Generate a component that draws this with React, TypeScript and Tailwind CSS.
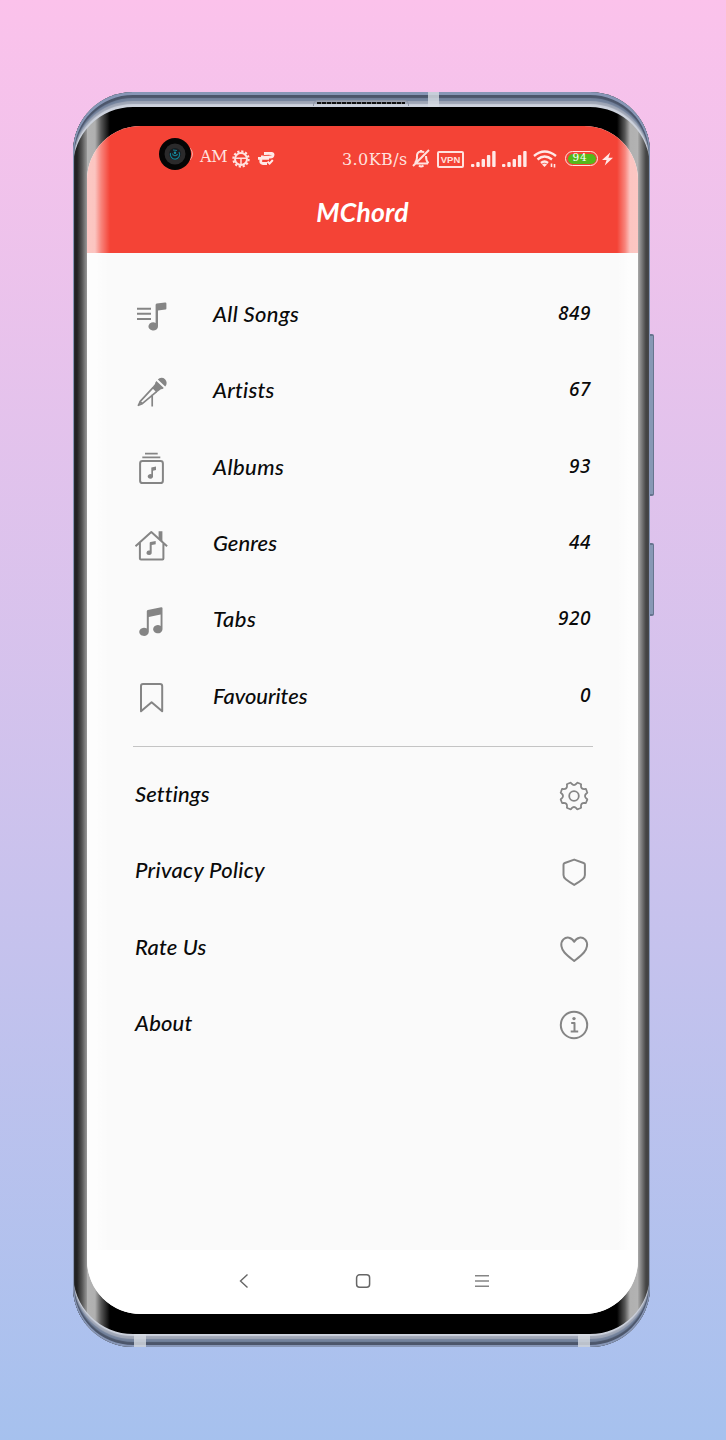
import React from 'react';
import type { ReactNode } from 'react';

const Icon = ({ children, className = 'stroke-2' }: { children: ReactNode; className?: string }) => (
  <svg viewBox="0 0 34 34" className={`size-[34px] shrink-0 fill-none stroke-[#858585] ${className}`} strokeLinejoin="round">
    {children}
  </svg>
);
const solid = 'fill-[#858585] stroke-none';

const SongsIcon = () => (
  <Icon>
    <path d="M3 8.7H17M3 13.7H17M3 18.9H17" />
    <path className={solid} d="M21.6 5Q21.6 3.8 22.8 3.6L31 2.6Q32.4 2.4 32.4 3.6V8.6Q32.4 9.5 31.5 9.6L24 10.6V26.2A4.8 4.1 0 1 1 21.6 22.9Z" />
  </Icon>
);
const MicIcon = () => (
  <Icon>
    <path className={solid} d="M23.8 3.4A5.1 5.1 0 0 1 31.2 10.5ZM22.4 5L29.8 12.1Q28.8 13.3 26.9 13.3L22.6 16.4L17.9 11.8L21 8Q21 6.3 22.4 5Z" />
    <path className="stroke-[1.7]" d="M19 11.6L6 25.6L8.3 27.7L22.6 15.6M6.2 25.6L4.4 29.3L8.2 27.6M18.2 18.6V30.4" />
  </Icon>
);
const AlbumIcon = () => (
  <Icon>
    <path className="stroke-[1.8]" d="M11 1.6H23.7M8.3 5.3H26.3" />
    <rect x="6.1" y="9.1" width="22.8" height="22" rx="2.4" />
    <path className={solid} d="M17.3 15.5L22 14.4V18L19 18.7V23.8A2.7 2.3 0 1 1 17.3 22.2Z" />
  </Icon>
);
const HouseIcon = () => (
  <Icon>
    <path d="M1.5 17.2L17.3 3L33.1 17.2M5.9 14V29.5Q5.9 30.4 7 30.4H28.5Q29.4 30.4 29.4 29.5V14" />
    <path className={solid} d="M24.6 2.2H28.4V13L24.6 9.5ZM15.7 14Q15.7 13.2 16.5 13L21.7 12V15.3L17.7 16.1V23.6A2.6 2.2 0 1 1 15.7 21.6Z" />
  </Icon>
);
const NotesIcon = () => (
  <Icon>
    <path className={solid} d="M12.8 6.2Q12.8 5.2 13.8 4.9L27.2 2.3Q28.5 2.2 28.5 3.2V24.2A4.7 4.1 0 1 1 26.6 20.9V9.4L14.8 12V26.8A4.8 4.1 0 1 1 12.8 23.5Z" />
  </Icon>
);
const BookmarkIcon = () => (
  <Icon>
    <path d="M7 30.3V5Q7 2.9 9 2.9H26Q28.2 2.9 28.2 5V30.3L17.6 21.2Z" />
  </Icon>
);

const gearPath =
  Array.from({ length: 8 }, (_, i) => {
    const at = (r: number, deg: number) => {
      const a = ((deg + i * 45) * Math.PI) / 180;
      return `${(17 + r * Math.cos(a)).toFixed(2)} ${(17 + r * Math.sin(a)).toFixed(2)}`;
    };
    return `${i ? 'L' : 'M'}${at(12.6, 11.5)}Q${at(14.2, 13)} ${at(13.7, 18)}L${at(13.7, 27)}Q${at(14.2, 32)} ${at(12.6, 33.5)}Q${at(9.6, 45)} ${at(12.6, 56.5)}`;
  }).join('') + 'Z';

const GearIcon = () => (
  <Icon className="stroke-[1.8]">
    <path d={gearPath} />
    <circle cx="17" cy="17" r="4.8" />
  </Icon>
);
const ShieldIcon = () => (
  <Icon>
    <path d="M17.2 4.6L26.6 8Q27.9 8.5 27.9 9.8V20Q27.9 22.4 25.6 24.2Q22.5 26.7 17.2 29.9Q11.9 26.7 8.8 24.2Q6.5 22.4 6.5 20V9.8Q6.5 8.5 7.8 8Z" />
  </Icon>
);
const HeartIcon = () => (
  <Icon>
    <path d="M17.2 9.8C14.5 4.7 9.3 4.6 6.4 7.4C2.6 11.3 4.5 17 7.5 20.5C10.4 23.9 13.7 26.2 17.2 28.9C20.7 26.2 24 23.9 26.9 20.5C29.9 17 31.8 11.3 28 7.4C25.1 4.6 19.9 4.7 17.2 9.8Z" />
  </Icon>
);
const InfoIcon = () => (
  <Icon>
    <circle cx="17" cy="17" r="13.2" />
    <circle className={solid} cx="17" cy="10.6" r="1.7" />
    <path d="M14.2 15H17.5V23.5M13.7 23.6H21.2" />
  </Icon>
);

const library = [
  { label: 'All Songs', count: '849', icon: <SongsIcon />, spacing: 'tracking-[0.35px]' },
  { label: 'Artists', count: '67', icon: <MicIcon />, spacing: 'tracking-[0.2px]' },
  { label: 'Albums', count: '93', icon: <AlbumIcon />, spacing: 'tracking-[0.45px]' },
  { label: 'Genres', count: '44', icon: <HouseIcon />, spacing: 'tracking-[0.05px]' },
  { label: 'Tabs', count: '920', icon: <NotesIcon />, spacing: 'tracking-[0.45px]' },
  { label: 'Favourites', count: '0', icon: <BookmarkIcon />, spacing: 'tracking-[-0.05px]' },
];
const more = [
  { label: 'Settings', icon: <GearIcon />, spacing: 'tracking-[0.1px]' },
  { label: 'Privacy Policy', icon: <ShieldIcon />, spacing: 'tracking-[0.3px]' },
  { label: 'Rate Us', icon: <HeartIcon />, spacing: 'tracking-[0.15px]' },
  { label: 'About', icon: <InfoIcon />, spacing: 'tracking-[0.15px]' },
];

const Signal = () => (
  <svg viewBox="0 0 25 16" className="h-4 w-[25px] fill-[#ffe9e7]">
    <rect x="0" y="13" width="3.4" height="3" rx="1" />
    <rect x="5.3" y="11" width="3.4" height="5" rx="1" />
    <rect x="10.6" y="8" width="3.4" height="8" rx="1" />
    <rect x="15.9" y="4" width="3.4" height="12" rx="1" />
    <rect x="21.2" y="0" width="3.4" height="16" rx="1" />
  </svg>
);

const StatusBar = () => (
  <div className="flex h-[62px] items-start pl-[72px] pr-[25px] font-['DejaVu_Serif',serif] text-[16px] leading-[20px] text-[#ffe2df]">
    <svg viewBox="0 0 34 34" className="mt-[11px] h-[34px] w-[34px] shrink-0">
      <path d="M31 11Q36 17 31 23" className="fill-none stroke-[#f9aaa3]" />
      <circle cx="16" cy="17" r="16" fill="#050505" />
      <circle cx="16" cy="17" r="10.5" fill="#2b2a2b" />
      <circle cx="16" cy="17" r="6" fill="#171c20" />
      <path d="M11.5 16A4.7 4.7 0 1 0 20 15M13.5 16.5A2.6 2.6 0 0 0 18.5 17M14 13L18 13.5" fill="none" stroke="#127e91" strokeWidth="1.2" />
      <circle cx="16" cy="15.7" r="1.2" fill="#1b8ca0" />
    </svg>
    <span className="ml-[7px] mt-[21px] w-[27px] tracking-[-0.4px]">AM</span>
    <svg viewBox="0 0 18 18" className="ml-[5px] mt-[24px] size-[18px] shrink-0 fill-none stroke-[#ffe2df]">
      <circle cx="9" cy="9" r="6" strokeWidth="2" />
      <circle cx="9" cy="9" r="7.6" strokeWidth="2.2" strokeDasharray="2.2 1.78" />
      <path d="M4 8.2H14M9 8V14" strokeWidth="1.5" />
    </svg>
    <svg viewBox="0 0 18 16" className="ml-[7px] mt-[25px] h-4 w-[18px] shrink-0">
      <path d="M7 2.5H14.5Q16.5 2.5 16 4.2Q15.6 6 13.5 6H4M1 7.3H12M4 8.5Q2.8 12.4 6 12.5H10" fill="none" stroke="#ffe9e7" strokeWidth="2.8" />
      <path d="M10.5 10.5L12.6 12.6L15.8 9" fill="none" stroke="#ffe9e7" strokeWidth="2" />
      <path d="M6.5 4.6L12.5 4.2M6 10H10.5" stroke="#f44336" strokeWidth=".8" />
    </svg>
    <span className="ml-auto mt-[24px] w-[67px] tracking-[0.4px]">3.0KB/s</span>
    <svg viewBox="0 0 18 20" className="ml-[3px] mt-[22px] h-5 w-[18px] shrink-0 fill-none stroke-[#ffe2df] stroke-2">
      <path d="M3 15.5H16M3 15Q5.2 12 5 9Q4.5 4 9 3.6Q11 3.6 12 4.5M14 8Q14 13 16.5 15.3M1 18L17 2M7 17.5Q9 19.5 11.5 17.5M9 2V4" />
    </svg>
    <div className="ml-[7px] mt-[25px] flex h-[17px] w-[27px] shrink-0 items-center justify-center rounded-[2px] border-2 border-[#ffe2df] font-['Liberation_Sans',sans-serif] text-[9.5px] font-bold">VPN</div>
    <div className="ml-[7px] mt-[25px] flex shrink-0 gap-[6px]"><Signal /><Signal /></div>
    <svg viewBox="0 0 24 18" className="ml-[6px] mt-[24px] h-[18px] w-[24px] shrink-0 fill-none stroke-[#ffe9e7] stroke-[2.4]">
      <path d="M1 6Q11.5 -3 23 6M4.5 9.5Q11.5 3.5 19 9.5M8 13Q11.5 10 15 13" />
      <path d="M9 14.5Q11.5 12.5 14 14.5L11.5 17Z" fill="#ffe9e7" stroke="none" />
      <path d="M18.5 13.5V17M21.5 14V17.5" className="stroke-[1.6]" />
    </svg>
    <div className="ml-[8px] mt-[25px] flex h-[15px] w-[33px] shrink-0 rounded-full border-[1.3px] border-[#ffe2df] p-[1.5px]">
      <div className="flex w-full items-center rounded-full bg-[#55b91a] pb-[3px] pl-[5px] text-[10.5px] leading-[9px] tracking-[0.8px] text-white">94</div>
    </div>
    <svg viewBox="0 0 12 14" className="ml-[4px] mt-[26px] h-[14px] w-[11px] shrink-0 fill-[#ffe9e7]"><path d="M9 0L0 8H5L3 14L12 5.5H7Z" /></svg>
  </div>
);

export default function App() {
  return (
    <div className="relative h-[1440px] w-[726px] overflow-hidden bg-gradient-to-b from-[#fbc2eb] to-[#a6c1ee] pt-[92px] font-['Lato',sans-serif] text-[#0a0a0a]">
      <div className="absolute left-[649px] top-[334px] h-[162px] w-[5px] rounded-r-[2px] border-y-2 border-r border-[#66758f] bg-[#8798b5]" />
      <div className="absolute left-[649px] top-[543px] h-[73px] w-[5px] rounded-r-[2px] border-y-2 border-r border-[#66758f] bg-[#8798b5]" />

      <main className="relative ml-[73px] h-[1255px] w-[577px] overflow-hidden rounded-[60px] bg-black pb-[33px] pl-[14px] pr-[12px] pt-[34px]">
        <div className="flex h-full flex-col overflow-hidden rounded-[54px] bg-[#fafafa]">
          <header className="h-[127px] shrink-0 bg-[#f44336]">
            <StatusBar />
            <h1 className="pt-[8px] text-center text-[26.5px] font-bold italic leading-[32px] tracking-[0.2px] text-white">MChord</h1>
          </header>
          <div className="grow pl-[47px] pr-[45px] pt-[24px]">
            {library.map(({ label, count, icon, spacing }) => (
              <div key={label} className="flex h-[76.3px] items-center">
                <div className="pt-[3px]">{icon}</div>
                <span className={`ml-[45px] pb-[2px] text-[22px] font-medium italic leading-none ${spacing}`}>{label}</span>
                <span className="ml-auto pb-[3px] pr-[2px] font-['Noto_Sans',sans-serif] text-[19px] font-medium italic leading-none tracking-[0.5px]">{count}</span>
              </div>
            ))}
            <hr className="-ml-px mt-[11px] h-px border-0 bg-[#c4c4c4]" />
            <div className="pt-[10px]">
              {more.map(({ label, icon, spacing }) => (
                <div key={label} className="flex h-[76.3px] items-center justify-between">
                  <span className={`pb-[2px] pl-px text-[22px] font-medium italic leading-none ${spacing}`}>{label}</span>
                  <div className="pr-[2px] pt-[2px]">{icon}</div>
                </div>
              ))}
            </div>
          </div>
          <nav className="flex h-[64px] shrink-0 items-center justify-between bg-white pb-[2px] pl-[149px] pr-[148px]">
            <svg viewBox="0 0 16 16" className="size-4 fill-none stroke-[#666] stroke-[1.4]"><path d="M11.5 1.5L4.5 8L11.5 14.5" /></svg>
            <svg viewBox="0 0 16 16" className="size-4 fill-none stroke-[#666] stroke-[1.5]"><rect x="1.6" y="1.8" width="13" height="12.5" rx="3" /></svg>
            <svg viewBox="0 0 16 16" className="size-4 stroke-[#858585] stroke-[1.6]"><path d="M1 2.8H15M1 8H15M1 13.2H15" /></svg>
          </nav>
        </div>
        <div className="pointer-events-none absolute inset-y-0 left-0 w-[38px] bg-[linear-gradient(90deg,#222_0,#222_4px,#555_9px,#999_14px,rgba(255,255,255,.7)_14px,rgba(255,255,255,.69)_22px,rgba(255,255,255,.35)_28px,transparent_37px)]" />
        <div className="pointer-events-none absolute inset-y-0 right-0 w-[38px] bg-[linear-gradient(270deg,#444_0,#444_4px,#777_8px,#aaa_12px,rgba(255,255,255,.7)_12px,rgba(255,255,255,.69)_20px,rgba(255,255,255,.35)_25px,transparent_33px)]" />
        <div className="pointer-events-none absolute inset-0 rounded-[60px] shadow-[inset_0_2px_0_1px_#8796b6,inset_0_-1px_0_1px_#8796b6,inset_0_5px_1px_1px_#4c566b,inset_0_-4px_1px_1px_#4c566b,inset_0_9px_1px_0_#74839d,inset_0_-8px_1px_0_#74839d,inset_0_12px_1px_0_#a0a7b7,inset_0_-11px_1px_0_#a0a7b7,inset_0_15px_0_0_#cdd2dd,inset_0_-13px_0_0_#cdd2dd]" />
        <div className="absolute left-[355px] top-0 h-[15px] w-[11px] bg-[#d7dce4]/80" />
        <div className="absolute bottom-0 left-[61px] h-[13px] w-[12px] bg-[#d7dce4]/80" />
        <div className="absolute bottom-0 left-[505px] h-[13px] w-[12px] bg-[#d7dce4]/80" />
        <div className="absolute left-[240px] top-[8px] h-[6px] w-[96px] rounded-t-[5px] border-x border-t border-[#8d94a3] px-[3px] pt-[1px]">
          <div className="h-[2px] bg-[repeating-linear-gradient(90deg,#111_0,#111_4px,#777_4px,#777_5px)]" />
        </div>
      </main>
    </div>
  );
}
